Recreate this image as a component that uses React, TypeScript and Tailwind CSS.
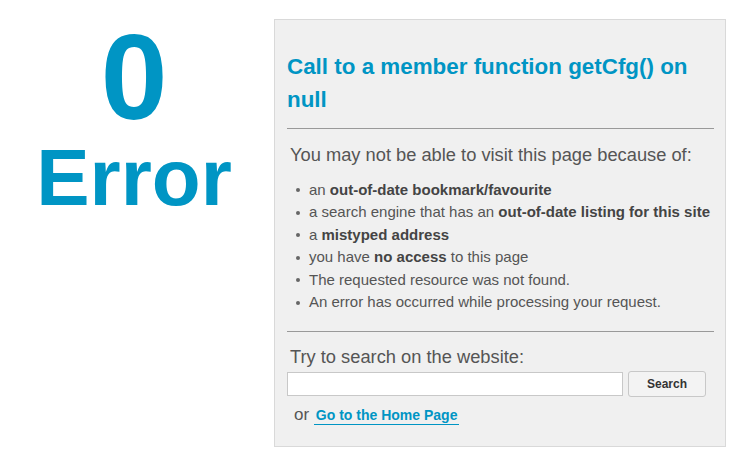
import React from 'react';

const reasons: { pre?: string; bold?: string; post?: string }[] = [
  { pre: 'an ', bold: 'out-of-date bookmark/favourite' },
  { pre: 'a search engine that has an ', bold: 'out-of-date listing for this site' },
  { pre: 'a ', bold: 'mistyped address' },
  { pre: 'you have ', bold: 'no access', post: ' to this page' },
  { pre: 'The requested resource was not found.' },
  { pre: 'An error has occurred while processing your request.' },
];

export default function App() {
  return (
    <div className="flex w-[741px] h-[467px] bg-white font-['Liberation_Sans',Arial,sans-serif]">
      <div className="w-[268px] flex flex-col items-center pt-[17px] font-bold text-[#0095c4]">
        <div className="text-[120px] leading-none">0</div>
        <div className="text-[80px] leading-none mt-[1px]">Error</div>
      </div>

      <div className="ml-[6px] mt-[19px] w-[452px] h-[428px] border border-[#d9d9d9] bg-[#f0f0f0] pl-[12px] pt-[30px]">
        <div className="w-[427px]">
          <h1 className="text-[22.4px] leading-[33px] font-bold text-[#0095c4]">
            Call to a member function getCfg() on null
          </h1>
          <hr className="mt-[12px] border-t border-[#999]" />

          <p className="mt-[11px] ml-[3px] text-[18.3px] leading-[30px] text-[#555] whitespace-nowrap">
            You may not be able to visit this page because of:
          </p>
          <ul className="mt-[8.5px] text-[15px] leading-[22.5px] text-[#555]">
            {reasons.map((r, i) => (
              <li key={i} className="flex pl-[9px]">
                <span className="mt-[9.5px] mr-[9px] w-[4px] h-[4px] shrink-0 rounded-full bg-[#666]" />
                <span>
                  {r.pre}
                  {r.bold && <b className="font-bold text-[#444]">{r.bold}</b>}
                  {r.post}
                </span>
              </li>
            ))}
          </ul>
          <hr className="mt-[17.5px] border-t border-[#999]" />

          <p className="mt-[10px] ml-[3px] text-[18.3px] leading-[30px] text-[#555]">
            Try to search on the website:
          </p>
          <div className="-mt-[1px] flex items-center gap-[5px]">
            <input
              type="text"
              className="w-[336px] h-[24px] bg-white border border-[#c8c8c8] px-1 text-[14px] outline-none"
            />
            <button
              type="button"
              className="w-[78px] h-[26px] rounded-[3px] border border-[#c8c8c8] bg-[#f3f3f3] text-[12px] font-bold text-[#333]"
            >
              Search
            </button>
          </div>

          <div className="mt-[6px] ml-[7px] text-[17px] leading-[24px] text-[#555]">
            or{' '}
            <a
              href="#"
              className="px-[2px] pb-[1px] border-b border-[#0095c4] text-[14px] font-bold text-[#0095c4]"
            >
              Go to the Home Page
            </a>
          </div>
        </div>
      </div>
    </div>
  );
}
